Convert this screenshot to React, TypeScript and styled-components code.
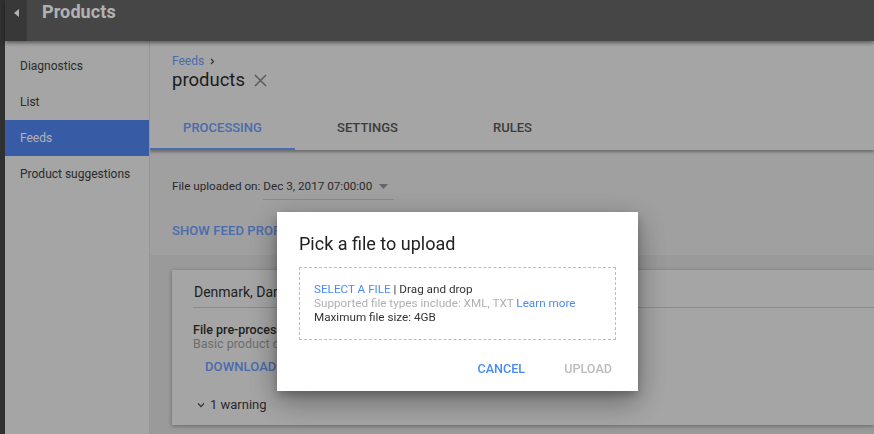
import React from "react";
import styled, { createGlobalStyle } from "styled-components";

const GlobalStyle = createGlobalStyle`
  html, body {
    margin: 0;
    padding: 0;
    width: 874px;
    height: 434px;
    overflow: hidden;
    font-family: Roboto, "Liberation Sans", Arial, sans-serif;
  }
  * { box-sizing: border-box; }
`;

const Page = styled.div`
  display: flex;
  width: 874px;
  height: 434px;
  background: #dddddd;
  overflow: hidden;
`;

const LeftRail = styled.div`
  width: 5px;
  flex: none;
  background: #454545;
`;

const Shell = styled.div`
  flex: 1;
  display: flex;
  flex-direction: column;
  min-width: 0;
`;

const TopBar = styled.header`
  height: 41px;
  flex: none;
  display: flex;
  align-items: flex-start;
  background: #656565;
  box-shadow: 0 2px 4px rgba(0, 0, 0, 0.45);
  position: relative;
  z-index: 2;
`;

const BackButton = styled.div`
  width: 22px;
  height: 41px;
  background: #515151;
  display: flex;
  justify-content: center;
  padding-top: 9px;
`;

const BarTitle = styled.h1`
  margin: 0 0 0 15px;
  font-size: 18px;
  line-height: 23px;
  font-weight: 700;
  color: #ffffff;
  letter-spacing: 0.1px;
`;

const Body = styled.div`
  flex: 1;
  display: flex;
  min-height: 0;
`;

const Sidebar = styled.nav`
  width: 145px;
  flex: none;
  background: #ececec;
  border-right: 1px solid #d6d6d6;
  padding-top: 7px;
  display: flex;
  flex-direction: column;
`;

const NavItem = styled.div<{ $active?: boolean }>`
  height: 36px;
  display: flex;
  align-items: center;
  padding-left: 15px;
  font-size: 12px;
  color: ${(p) => (p.$active ? "#ffffff" : "#3d3d3d")};
  background: ${(p) => (p.$active ? "#4f83ec" : "transparent")};
`;

const Content = styled.main`
  flex: 1;
  display: flex;
  flex-direction: column;
  min-width: 0;
  overflow: hidden;
`;

const Header = styled.div`
  background: #ededed;
  box-shadow: 0 2px 3px rgba(0, 0, 0, 0.35);
  position: relative;
  z-index: 1;
`;

const TitleBlock = styled.div`
  padding: 13px 0 12px 22px;
`;

const Breadcrumb = styled.div`
  display: flex;
  align-items: center;
  gap: 6px;
  font-size: 12px;
  line-height: 14px;
  color: #6a9af8;
`;

const PageTitle = styled.div`
  display: flex;
  align-items: center;
  gap: 9px;
  font-size: 18.5px;
  line-height: 24px;
  color: #2b2b2b;
`;

const Tabs = styled.div`
  display: flex;
  height: 46px;
`;

const Tab = styled.div<{ $active?: boolean }>`
  width: 145px;
  display: flex;
  align-items: center;
  justify-content: center;
  padding-top: ${(p) => (p.$active ? "2px" : "0")};
  font-size: 13px;
  font-weight: 500;
  color: ${(p) => (p.$active ? "#6a9af8" : "#565656")};
  border-bottom: ${(p) => (p.$active ? "2px solid #6a9af8" : "none")};
`;

const Panel = styled.section`
  background: #e5e5e5;
  padding: 26px 22px 16px;
  display: flex;
  flex-direction: column;
  gap: 23px;
`;

const UploadRow = styled.div`
  display: flex;
  align-items: flex-end;
  font-size: 11.7px;
  color: #3c3c3c;
  white-space: nowrap;
`;

const RowLabel = styled.span`
  line-height: 20px;
  padding-bottom: 4px;
  margin-right: 3px;
`;

const Select = styled.div`
  flex: none;
  width: 131px;
  display: flex;
  align-items: center;
  justify-content: space-between;
  line-height: 20px;
  padding: 0 6px 3px 0;
  border-bottom: 1px solid #c5c5c5;
`;

const LinkButton = styled.div`
  font-size: 13px;
  font-weight: 500;
  line-height: 16px;
  color: #6a9af8;
  letter-spacing: 0.1px;
  white-space: nowrap;
`;

const Card = styled.section`
  margin: 15px 0 0 22px;
  background: #ececec;
  box-shadow: 0 1px 4px rgba(0, 0, 0, 0.35);
  padding-bottom: 10px;
`;

const CardHeader = styled.div`
  margin-left: 21px;
  padding: 14px 0 7px 1px;
  font-size: 14px;
  line-height: 16px;
  color: #303030;
  border-bottom: 1px solid #c8c8c8;
`;

const CardBody = styled.div`
  padding: 15px 0 0 21px;
  display: flex;
  flex-direction: column;
`;

const StatusTitle = styled.div`
  font-size: 12.5px;
  line-height: 14px;
  font-weight: 500;
  color: #303030;
`;

const StatusText = styled.div`
  font-size: 12.5px;
  line-height: 14px;
  color: #9d9d9d;
`;

const CardButton = styled(LinkButton)`
  height: 32px;
  display: flex;
  align-items: center;
  padding-left: 12px;
`;

const Warning = styled.div`
  margin-top: 12px;
  display: flex;
  align-items: center;
  gap: 5px;
  padding-left: 4px;
  font-size: 13px;
  line-height: 20px;
  color: #3c3c3c;
`;

const Scrim = styled.div`
  position: fixed;
  inset: 0;
  background: rgba(0, 0, 0, 0.3);
  z-index: 10;
`;

const Dialog = styled.div`
  position: absolute;
  left: 277px;
  top: 212px;
  width: 361px;
  height: 179px;
  background: #ffffff;
  box-shadow: 0 10px 28px rgba(0, 0, 0, 0.38), 0 4px 8px rgba(0, 0, 0, 0.2);
  padding: 20px 22px 0;
  display: flex;
  flex-direction: column;
`;

const DialogTitle = styled.h2`
  margin: 0;
  font-size: 18px;
  line-height: 24px;
  font-weight: 400;
  color: #212121;
`;

const DropZone = styled.div`
  margin-top: 11px;
  border: 1px dashed #bdbdbd;
  padding: 14px 14px 15px;
  font-size: 11.7px;
  line-height: 14px;
  color: #333333;
`;

const Line = styled.div``;

const Accent = styled.span`
  color: #4a8af4;
`;

const Muted = styled.span`
  color: #b0b0b0;
`;

const Actions = styled.div`
  margin-top: 12px;
  display: flex;
  justify-content: flex-end;
  gap: 15px;
  margin-right: -8px;
`;

const DialogButton = styled.div<{ $disabled?: boolean }>`
  height: 32px;
  display: flex;
  align-items: center;
  padding: 0 12px;
  font-size: 12.6px;
  font-weight: 500;
  color: ${(p) => (p.$disabled ? "#bdbdbd" : "#4a8af4")};
`;

export default function App() {
  return (
    <>
      <GlobalStyle />
      <Page>
        <LeftRail />
        <Shell>
          <TopBar>
            <BackButton>
              <svg width="5" height="8" viewBox="0 0 5 8">
                <polygon points="5,0 5,8 0,4" fill="#ffffff" />
              </svg>
            </BackButton>
            <BarTitle>Products</BarTitle>
          </TopBar>
          <Body>
            <Sidebar>
              <NavItem>Diagnostics</NavItem>
              <NavItem>List</NavItem>
              <NavItem $active>Feeds</NavItem>
              <NavItem>Product suggestions</NavItem>
            </Sidebar>
            <Content>
              <Header>
                <TitleBlock>
                  <Breadcrumb>
                    <span>Feeds</span>
                    <svg width="5" height="7" viewBox="0 0 5 7">
                      <polyline points="1,1 3.5,3.5 1,6" fill="none" stroke="#505050" strokeWidth="1.3" />
                    </svg>
                  </Breadcrumb>
                  <PageTitle>
                    <span>products</span>
                    <svg width="13" height="13" viewBox="0 0 13 13">
                      <path d="M1 1 L12 12 M12 1 L1 12" stroke="#838383" strokeWidth="1.5" />
                    </svg>
                  </PageTitle>
                </TitleBlock>
                <Tabs>
                  <Tab $active>PROCESSING</Tab>
                  <Tab>SETTINGS</Tab>
                  <Tab>RULES</Tab>
                </Tabs>
              </Header>
              <Panel>
                <UploadRow>
                  <RowLabel>File uploaded on:</RowLabel>
                  <Select>
                    <span>Dec 3, 2017 07:00:00</span>
                    <svg width="9" height="5" viewBox="0 0 9 5">
                      <polygon points="0,0 9,0 4.5,5" fill="#929292" />
                    </svg>
                  </Select>
                </UploadRow>
                <LinkButton>SHOW FEED PROPERTIES</LinkButton>
              </Panel>
              <Card>
                <CardHeader>Denmark, Danish</CardHeader>
                <CardBody>
                  <StatusTitle>File pre-processing completed</StatusTitle>
                  <StatusText>Basic product data checked</StatusText>
                  <CardButton>DOWNLOAD</CardButton>
                  <Warning>
                    <svg width="8" height="6" viewBox="0 0 8 6">
                      <polyline points="1,1.5 4,4.5 7,1.5" fill="none" stroke="#505050" strokeWidth="1.3" />
                    </svg>
                    <span>1 warning</span>
                  </Warning>
                </CardBody>
              </Card>
            </Content>
          </Body>
        </Shell>
      </Page>
      <Scrim>
        <Dialog>
          <DialogTitle>Pick a file to upload</DialogTitle>
          <DropZone>
            <Line>
              <Accent>SELECT A FILE</Accent> | Drag and drop
            </Line>
            <Line>
              <Muted>Supported file types include: XML, TXT</Muted> <Accent>Learn more</Accent>
            </Line>
            <Line>Maximum file size: 4GB</Line>
          </DropZone>
          <Actions>
            <DialogButton>CANCEL</DialogButton>
            <DialogButton $disabled>UPLOAD</DialogButton>
          </Actions>
        </Dialog>
      </Scrim>
    </>
  );
}
